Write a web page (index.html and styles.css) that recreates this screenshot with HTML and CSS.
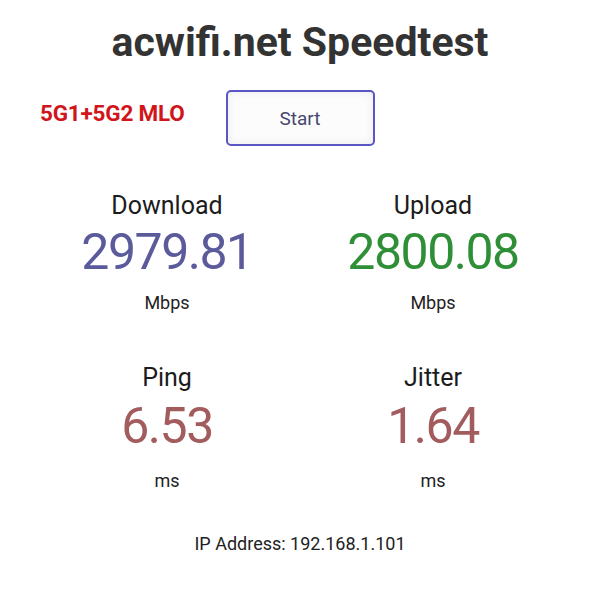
FILE: index.html
```html
<!DOCTYPE html>
<html>
<head>
<meta charset="utf-8">
<link rel="stylesheet" href="styles.css">
</head>
<body>
<main class="page">
  <h1 class="title">acwifi.net Speedtest</h1>
  <div class="controls">
    <div class="tag">5G1+5G2 MLO</div>
    <button class="start">Start</button>
    <div></div>
  </div>
  <div class="metrics">
    <div class="metric">
      <div class="label">Download</div>
      <div class="value dl">2979.81</div>
      <div class="unit">Mbps</div>
    </div>
    <div class="metric">
      <div class="label">Upload</div>
      <div class="value ul">2800.08</div>
      <div class="unit">Mbps</div>
    </div>
    <div class="metric small">
      <div class="label">Ping</div>
      <div class="value lat">6.53</div>
      <div class="unit">ms</div>
    </div>
    <div class="metric small">
      <div class="label">Jitter</div>
      <div class="value lat">1.64</div>
      <div class="unit">ms</div>
    </div>
  </div>
  <div class="ip">IP Address: 192.168.1.101</div>
</main>
</body>
</html>
```
FILE: styles.css
```css
html, body {
  margin: 0;
  padding: 0;
  background: #ffffff;
}
.page {
  width: 600px;
  font-family: Roboto, "Open Sans", sans-serif;
  color: #222;
}
.title {
  margin: 0;
  padding-top: 18px;
  text-align: center;
  font-size: 41px;
  font-weight: 700;
  color: #333333;
  line-height: 48px;
}
.controls {
  display: grid;
  grid-template-columns: 1fr auto 1fr;
  margin-top: 24px;
}
.tag {
  padding-left: 40px;
  padding-top: 10px;
  font-size: 22.5px;
  font-weight: 700;
  color: #d0161b;
  line-height: 26px;
  letter-spacing: -0.2px;
}
.start {
  width: 149px;
  height: 56px;
  border: 2px solid #5a56c4;
  border-radius: 5px;
  background: #fcfcfc;
  box-shadow: inset 0 0 10px rgba(0,0,0,0.07);
  font-family: inherit;
  font-size: 19px;
  color: #474770;
  padding: 0;
}
.metrics {
  display: grid;
  grid-template-columns: 266px 266px;
  padding: 0 34px;
  margin-top: 45px;
  row-gap: 49px;
}
.metric {
  display: flex;
  flex-direction: column;
  align-items: center;
}
.label {
  font-size: 25px;
  line-height: 30px;
  color: #1c1c1c;
}
.value {
  font-size: 50px;
  line-height: 54px;
  margin-top: 4px;
  letter-spacing: -1.5px;
}
.unit {
  font-size: 18px;
  line-height: 22px;
  margin-top: 13px;
  color: #222;
}
.small .value {
  margin-top: 6px;
}
.small .unit {
  margin-top: 17px;
}
.dl { color: #5b5b9b; }
.ul { color: #2f8f36; }
.lat { color: #a25c5e; }
.ip {
  text-align: center;
  font-size: 18px;
  margin-top: 41px;
  color: #222;
}
```
